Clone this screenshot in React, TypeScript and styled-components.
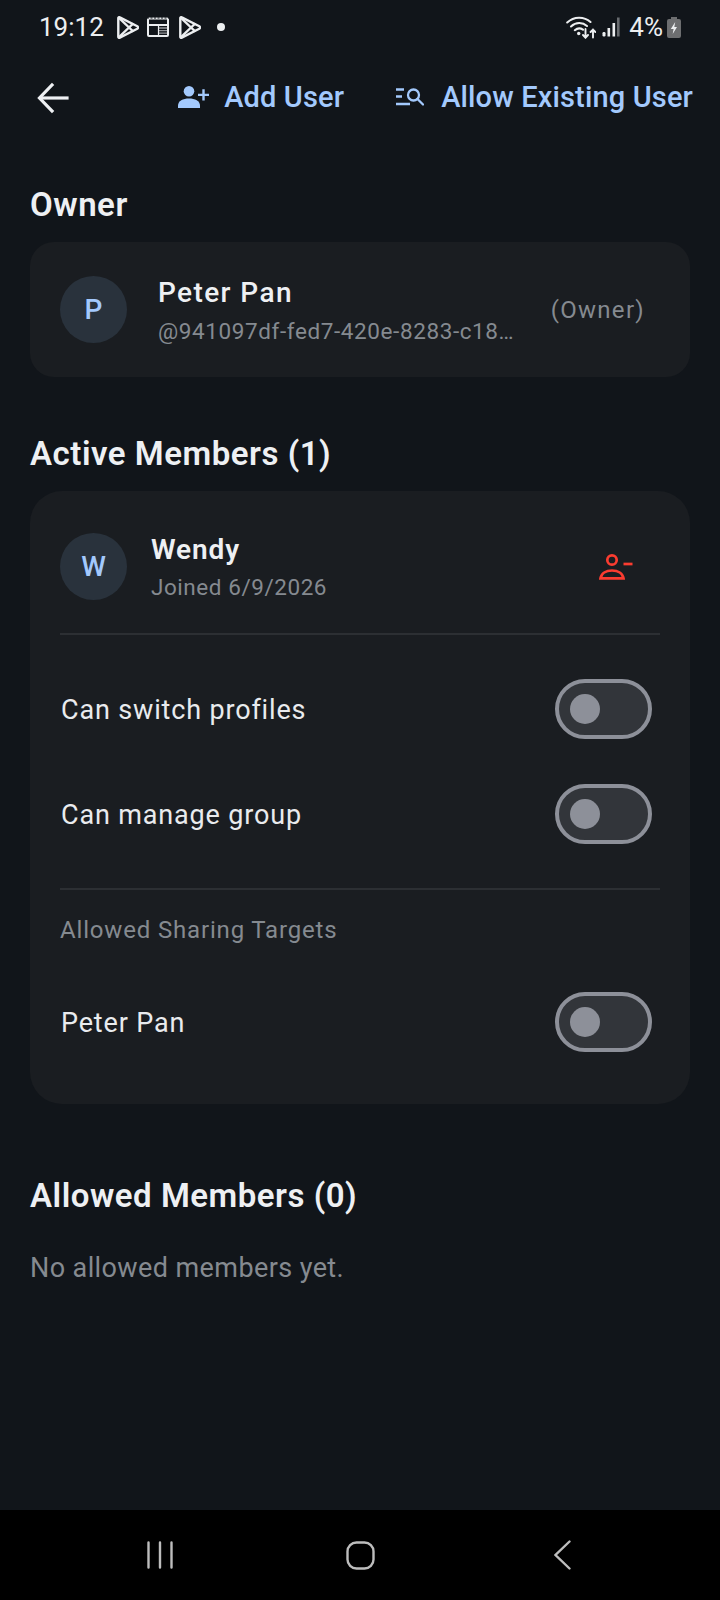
import React from "react";
import styled, { createGlobalStyle } from "styled-components";

const Global = createGlobalStyle`
  html, body { margin: 0; padding: 0; background: #11151a; }
  * { box-sizing: border-box; }
  body { font-family: Roboto, "Liberation Sans", sans-serif; }
`;

const Screen = styled.div`
  width: 720px;
  height: 1600px;
  display: flex;
  flex-direction: column;
  background: #11151a;
  color: #eef0f3;
  overflow: hidden;
`;

const StatusBar = styled.div`
  height: 54px;
  padding: 0 39px 0 39px;
  display: flex;
  align-items: center;
  justify-content: space-between;
  color: #eceef0;
`;

const StatusGroup = styled.div`
  display: flex;
  align-items: center;
`;

const Clock = styled.span`
  font-size: 26px;
  line-height: 30px;
  margin-right: 13px;
`;

const Percent = styled.span`
  font-size: 26px;
  line-height: 30px;
  margin: 0 4px 0 9px;
`;

const Toolbar = styled.div`
  height: 80px;
  margin-top: 3px;
  padding: 0 27px 0 36px;
  display: flex;
  align-items: center;
`;

const Back = styled.button`
  width: 34px;
  height: 34px;
  margin-top: 2px;
  padding: 0;
  display: flex;
  background: none;
  border: 0;
  color: #eef0f3;
  margin-right: auto;
`;

const ToolAction = styled.div<{ $gap: number; $left?: number }>`
  display: flex;
  align-items: center;
  gap: ${(p) => p.$gap}px;
  margin-left: ${(p) => p.$left ?? 0}px;
  color: #a3c9fd;
  font-size: 29px;
  font-weight: 500;
  line-height: 34px;
  letter-spacing: 0.15px;
`;

const Content = styled.main`
  flex: 1;
  padding: 46px 30px 0;
  display: flex;
  flex-direction: column;
`;

const Heading = styled.h2<{ $top?: number }>`
  margin: ${(p) => p.$top ?? 0}px 0 0;
  font-size: 33px;
  line-height: 44px;
  font-weight: 600;
  letter-spacing: 0.52px;
  color: #eef0f3;
`;

const Card = styled.section<{ $radius: number; $top: number }>`
  margin-top: ${(p) => p.$top}px;
  background: #1a1d21;
  border-radius: ${(p) => p.$radius}px;
  padding: 0 30px;
`;

const OwnerRow = styled.div`
  height: 135px;
  display: flex;
  align-items: center;
`;

const MemberRow = styled.div`
  height: 144px;
  padding-top: 8px;
  display: flex;
  align-items: center;
  border-bottom: 2px solid #2c2f33;
`;

const Avatar = styled.div`
  width: 67px;
  height: 67px;
  flex: none;
  border-radius: 50%;
  background: #29323c;
  color: #a3c9fd;
  font-size: 28px;
  font-weight: 500;
  display: flex;
  align-items: center;
  justify-content: center;
`;

const Info = styled.div<{ $left: number }>`
  margin-left: ${(p) => p.$left}px;
  padding-top: 2px;
  flex: 1;
  min-width: 0;
`;

const Name = styled.div<{ $spacing: number; $weight: number }>`
  font-size: 28px;
  line-height: 34px;
  font-weight: ${(p) => p.$weight};
  letter-spacing: ${(p) => p.$spacing}px;
  color: #eef0f3;
`;

const Sub = styled.div<{ $top: number; $spacing: number }>`
  margin-top: ${(p) => p.$top}px;
  font-size: 22.5px;
  line-height: 28px;
  letter-spacing: ${(p) => p.$spacing}px;
  color: #858a90;
`;

const Role = styled.span`
  margin-right: 15px;
  font-size: 24px;
  letter-spacing: 1.3px;
  color: #858a90;
`;

const Remove = styled.button`
  width: 34px;
  height: 27px;
  margin-right: 27px;
  padding: 0;
  border: 0;
  background: none;
  color: #fb3c30;
  display: flex;
`;

const ToggleRow = styled.div`
  height: 105px;
  display: flex;
  align-items: center;
  justify-content: space-between;
  padding-right: 8px;
`;

const ToggleStack = styled.div`
  padding-top: 21px;
`;

const TargetRow = styled(ToggleRow)`
  margin: 23px 0 30px;
`;

const ToggleLabel = styled.span`
  margin-left: 1px;
  padding-top: 2px;
  font-size: 27px;
  letter-spacing: 0.84px;
  color: #e9ebee;
`;

const Toggle = styled.div`
  width: 97px;
  height: 60px;
  border-radius: 30px;
  border: 4px solid #8d9099;
  background: #32353a;
  display: flex;
  align-items: center;
  padding-left: 11px;
`;

const Thumb = styled.span`
  width: 30px;
  height: 30px;
  border-radius: 50%;
  background: #8d9099;
`;

const Divider = styled.div<{ $top: number }>`
  height: 2px;
  margin-top: ${(p) => p.$top}px;
  background: #2c2f33;
`;

const SubHeading = styled.div`
  margin-top: 24px;
  font-size: 24px;
  line-height: 32px;
  letter-spacing: 0.83px;
  color: #858a90;
`;

const Empty = styled.p`
  margin: 33px 0 0;
  font-size: 27px;
  line-height: 34px;
  letter-spacing: 0.4px;
  color: #858a90;
`;

const NavBar = styled.nav`
  height: 90px;
  padding-left: 147px;
  background: #000;
  display: flex;
  align-items: center;
  color: #bdbdbd;
`;

const NavItem = styled.span<{ $left?: number }>`
  display: flex;
  margin-left: ${(p) => p.$left ?? 0}px;
`;

const IconSlot = styled.span<{ $right?: number; $left?: number }>`
  display: flex;
  margin-right: ${(p) => p.$right ?? 0}px;
  margin-left: ${(p) => p.$left ?? 0}px;
`;

const PlayIcon = () => (
  <svg width="22" height="23" viewBox="0 0 22 23" fill="none" stroke="currentColor" strokeWidth="2.400" strokeLinejoin="round" strokeLinecap="round">
    <path d="M1.300 2.300c0-.9.8-1.300 1.500-.9l17.500 8.900c.9.500.9 1.900 0 2.400L2.800 21.600c-.7.400-1.500 0-1.500-.9z" />
    <path d="M2 1.800L12 11.500 2 21.200M12 11.500l3.600-3.400M12 11.500l3.600 3.400" />
  </svg>
);

const NewsIcon = () => (
  <svg width="22" height="20" viewBox="0 0 22 20" fill="none">
    <rect x="1" y="1.500" width="20" height="17.500" rx="1" stroke="currentColor" strokeWidth="2" />
    <path d="M0 1h22" stroke="#11151a" strokeWidth="1" strokeDasharray="2 1.500" />
    <path d="M1 8h20" stroke="currentColor" strokeWidth="2" />
    <path d="M11.500 8v11" stroke="currentColor" strokeWidth="1.200" />
    <path d="M12 11h8M12 13.600h8M12 16.200h8" stroke="currentColor" strokeWidth="1.300" opacity=".6" />
  </svg>
);

const Dot = styled.span`
  width: 8px;
  height: 8px;
  margin-left: 16px;
  border-radius: 50%;
  background: currentColor;
`;

const WifiIcon = () => (
  <svg width="30" height="23" viewBox="0 0 30 23" fill="none" stroke="currentColor" strokeWidth="2.100" strokeLinecap="round">
    <path d="M1.200 6.500C8 .2 18 .2 24.500 6" />
    <path d="M5 10.500C10 6 16.500 6 21 10" />
    <path d="M8.800 14.200c2.700-2.200 5.600-2.200 8.200-.5" />
    <circle cx="12.700" cy="17.500" r="1.700" fill="currentColor" stroke="none" />
    <path d="M19.500 13v8.500M17 19l2.500 2.700 2.500-2.700" strokeWidth="1.900" />
    <path d="M27 21.500v-8M24.600 16l2.400-2.500 2.400 2.500" strokeWidth="1.900" />
  </svg>
);

const SignalIcon = () => (
  <svg width="18" height="20" viewBox="0 0 18 20">
    <rect x="0.500" y="15" width="3" height="4.500" rx="1.200" fill="currentColor" />
    <rect x="5.500" y="11" width="2.600" height="8.500" fill="currentColor" />
    <rect x="10.500" y="6" width="2.600" height="13.500" fill="currentColor" />
    <rect x="15" y="0.500" width="2.600" height="19" fill="currentColor" opacity=".4" />
  </svg>
);

const BatteryIcon = () => (
  <svg width="14" height="21" viewBox="0 0 14 21">
    <path d="M4 0h6v2h2a2 2 0 0 1 2 2v15a2 2 0 0 1-2 2H2a2 2 0 0 1-2-2V4a2 2 0 0 1 2-2h2z" fill="#6d6e70" />
    <path d="M8.200 5L3.800 12h2.800L5.700 17l4.300-7H7.300z" fill="#eceef0" />
  </svg>
);

const ArrowBack = () => (
  <svg width="34" height="34" viewBox="0 0 34 34" fill="none" stroke="currentColor" strokeWidth="3.200" strokeLinecap="square">
    <path d="M31 17H5" />
    <path d="M16 4L3.500 17 16 30" />
  </svg>
);

const PersonAdd = () => (
  <svg width="31" height="22" viewBox="0 0 31 22" fill="currentColor">
    <circle cx="11" cy="5.300" r="5.300" />
    <path d="M0 22v-2.500C0 15 5 12.500 11 12.500S22 15 22 19.500V22z" />
    <path d="M24.300 3.200h2.400v4.500H31v2.400h-4.300v4.400h-2.400v-4.400H20V7.700h4.300z" />
  </svg>
);

const SearchList = () => (
  <svg width="28" height="18" viewBox="0 0 28 18" fill="none" stroke="currentColor" strokeWidth="2.300">
    <path d="M0 1.500h8M0 8.500h6M0 16h14" />
    <circle cx="17.500" cy="7" r="5.500" />
    <path d="M21.500 11l5.500 5.500" strokeLinecap="round" />
  </svg>
);

const PersonRemove = () => (
  <svg width="34" height="27" viewBox="0 0 34 27" fill="none" stroke="currentColor" strokeWidth="2.700">
    <circle cx="13" cy="7" r="4.700" />
    <path d="M1.500 25.300c.8-5 5.500-7.800 11.500-7.800s10.700 2.800 11.500 7.800z" />
    <path d="M24.500 11h9" />
  </svg>
);

const NavRecents = () => (
  <svg width="26" height="28" viewBox="0 0 26 28" stroke="currentColor" strokeWidth="2.400" strokeLinecap="round">
    <path d="M1.500 1.500v25M13 1.500v25M24.500 1.500v25" />
  </svg>
);

const NavHome = () => (
  <svg width="29" height="29" viewBox="0 0 29 29" fill="none" stroke="currentColor" strokeWidth="2.400">
    <rect x="1.500" y="1.500" width="26" height="26" rx="9" />
  </svg>
);

const NavBack = () => (
  <svg width="17" height="30" viewBox="0 0 17 30" fill="none" stroke="currentColor" strokeWidth="2.400" strokeLinecap="round">
    <path d="M15.500 1.500L1.500 15l14 13.500" />
  </svg>
);

export default function App() {
  return (
    <Screen>
      <Global />
      <StatusBar>
        <StatusGroup>
          <Clock>19:12</Clock>
          <IconSlot $right={8}>
            <PlayIcon />
          </IconSlot>
          <IconSlot $right={10}>
            <NewsIcon />
          </IconSlot>
          <PlayIcon />
          <Dot />
        </StatusGroup>
        <StatusGroup>
          <WifiIcon />
          <IconSlot $left={6}>
            <SignalIcon />
          </IconSlot>
          <Percent>4%</Percent>
          <BatteryIcon />
        </StatusGroup>
      </StatusBar>

      <Toolbar>
        <Back aria-label="Back">
          <ArrowBack />
        </Back>
        <ToolAction $gap={15}>
          <PersonAdd />
          Add User
        </ToolAction>
        <ToolAction $gap={17} $left={52}>
          <SearchList />
          Allow Existing User
        </ToolAction>
      </Toolbar>

      <Content>
        <Heading>Owner</Heading>
        <Card $radius={24} $top={15}>
          <OwnerRow>
            <Avatar>P</Avatar>
            <Info $left={31}>
              <Name $spacing={1.4} $weight={500}>Peter Pan</Name>
              <Sub $top={7} $spacing={0.6}>@941097df-fed7-420e-8283-c18…</Sub>
            </Info>
            <Role>(Owner)</Role>
          </OwnerRow>
        </Card>

        <Heading $top={55}>Active Members (1)</Heading>
        <Card $radius={32} $top={15}>
          <MemberRow>
            <Avatar>W</Avatar>
            <Info $left={24}>
              <Name $spacing={0.9} $weight={600}>Wendy</Name>
              <Sub $top={6} $spacing={0.55}>Joined 6/9/2026</Sub>
            </Info>
            <Remove aria-label="Remove">
              <PersonRemove />
            </Remove>
          </MemberRow>
          <ToggleStack>
            <ToggleRow>
              <ToggleLabel>Can switch profiles</ToggleLabel>
              <Toggle>
                <Thumb />
              </Toggle>
            </ToggleRow>
            <ToggleRow>
              <ToggleLabel>Can manage group</ToggleLabel>
              <Toggle>
                <Thumb />
              </Toggle>
            </ToggleRow>
          </ToggleStack>
          <Divider $top={22} />
          <SubHeading>Allowed Sharing Targets</SubHeading>
          <TargetRow>
            <ToggleLabel>Peter Pan</ToggleLabel>
            <Toggle>
              <Thumb />
            </Toggle>
          </TargetRow>
        </Card>

        <Heading $top={70}>Allowed Members (0)</Heading>
        <Empty>No allowed members yet.</Empty>
      </Content>

      <NavBar>
        <NavItem>
          <NavRecents />
        </NavItem>
        <NavItem $left={173}>
          <NavHome />
        </NavItem>
        <NavItem $left={179}>
          <NavBack />
        </NavItem>
      </NavBar>
    </Screen>
  );
}
